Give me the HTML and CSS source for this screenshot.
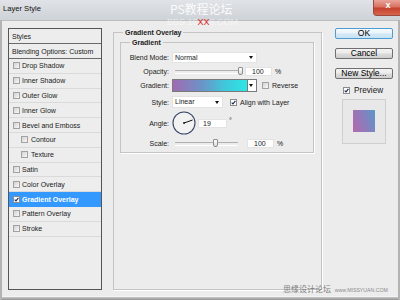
FILE: index.html
```html
<!DOCTYPE html>
<html lang="en">
<head>
  <meta charset="UTF-8">
  <meta name="viewport" content="width=device-width, initial-scale=1.0">
  <title>Layer Style</title>
  <link rel="stylesheet" href="styles.css">
</head>
<body>
  <div class="window">
    <div class="titlebar">
      <span class="title">Layer Style</span>
      <a class="btn-close" href="javascript:void(0);">x</a>
    </div>
    <div class="client">
      <!-- styles list -->
      <ul class="styles">
        <li class="head">Styles</li>
        <li class="head">Blending Options: Custom</li>
        <li class="item"><i class="check"></i>Drop Shadow</li>
        <li class="item"><i class="check"></i>Inner Shadow</li>
        <li class="item"><i class="check"></i>Outer Glow</li>
        <li class="item"><i class="check"></i>Inner Glow</li>
        <li class="item"><i class="check"></i>Bevel and Emboss</li>
        <li class="item sub"><i class="check"></i>Contour</li>
        <li class="item sub"><i class="check"></i>Texture</li>
        <li class="item"><i class="check"></i>Satin</li>
        <li class="item"><i class="check"></i>Color Overlay</li>
        <li class="item active"><i class="check on"><svg viewBox="0 0 6 6"><path d="M0.8 3.1 L2.4 4.7 L5.3 1" /></svg></i>Gradient Overlay</li>
        <li class="item"><i class="check"></i>Pattern Overlay</li>
        <li class="item"><i class="check"></i>Stroke</li>
      </ul>

      <!-- gradient overlay options -->
      <fieldset class="group overlay">
        <legend>Gradient Overlay</legend>
        <fieldset class="group gradient">
          <legend>Gradient</legend>
          <div class="row r-blend">
            <label>Blend Mode:</label>
            <div class="select blend">Normal</div>
          </div>
          <div class="row r-opacity">
            <label>Opacity:</label>
            <div class="slider opacity"><span class="thumb"></span></div>
            <div class="field">100</div>
            <span class="unit">%</span>
          </div>
          <div class="row r-gradient">
            <label>Gradient:</label>
            <div class="grad-pick"><span class="bar"></span><span class="drop"></span></div>
            <i class="check reverse"></i><span>Reverse</span>
          </div>
          <div class="row r-style">
            <label>Style:</label>
            <div class="select style">Linear</div>
            <i class="check on align"><svg viewBox="0 0 6 6"><path d="M0.8 3.1 L2.4 4.7 L5.3 1" /></svg></i><span>Align with Layer</span>
          </div>
          <div class="row r-angle">
            <label>Angle:</label>
            <svg class="dial" viewBox="0 0 24 24">
              <circle cx="12" cy="12" r="11" />
              <line x1="12" y1="12" x2="20.6" y2="9" />
              <circle class="dot" cx="12" cy="12" r="0.9" />
            </svg>
            <div class="field angle">19</div>
            <span class="deg">°</span>
          </div>
          <div class="row r-scale">
            <label>Scale:</label>
            <div class="slider scale"><span class="thumb"></span></div>
            <div class="field">100</div>
            <span class="unit">%</span>
          </div>
        </fieldset>
      </fieldset>

      <!-- buttons and preview -->
      <div class="side">
        <button class="btn default">OK</button>
        <button class="btn">Cancel</button>
        <button class="btn">New Style...</button>
        <div class="preview-check"><i class="check on"><svg viewBox="0 0 6 6"><path d="M0.8 3.1 L2.4 4.7 L5.3 1" /></svg></i>Preview</div>
        <div class="preview"><div class="swatch"></div></div>
      </div>
    </div>
    <div class="frame-bottom"></div>

    <div class="wm-top">PS教程论坛</div>
    <div class="wm-url">BBS.16<span>XX</span>8.COM</div>
    <div class="wm-bottom">思缘设计论坛 <small>www.MISSYUAN.COM</small></div>
  </div>
</body>
</html>
```

FILE: styles.css
```css
/* base */
* {
  margin: 0;
  padding: 0;
  box-sizing: border-box;
}
body {
  width: 400px;
  height: 300px;
  overflow: hidden;
  font-family: "Liberation Sans", Arial, sans-serif;
  font-size: 7px;
  color: #1a1a1a;
}
ul {
  list-style: none;
}

/* window frame */
.window {
  position: relative;
  width: 400px;
  height: 300px;
  background: #b3b3b3;
}
.titlebar {
  position: relative;
  height: 20px;
  padding-left: 3px;
  line-height: 18px;
  font-size: 7.6px;
  color: #111;
  background: linear-gradient(180deg, #e0e4e8 0%, #d5d9de 60%, #ced3d9 100%);
}
.titlebar .btn-close {
  position: absolute;
  top: 0;
  right: -3px;
  width: 30px;
  height: 16px;
  line-height: 14px;
  text-align: center;
  font: bold 9px "Liberation Sans", sans-serif;
  color: #fff;
  text-decoration: none;
  border: 1px solid #9c4a3e;
  border-top: none;
  border-radius: 0 0 4px 4px;
  background: linear-gradient(180deg, #e9a599 0%, #d87362 45%, #c4432f 55%, #d6664f 100%);
}
.client {
  display: flex;
  height: 276px;
  margin: 0 2px;
  padding: 8px 5px 6px 6px;
  background: #ececec;
  box-shadow: inset 0 1px 0 #bdbdbd;
}
.frame-bottom {
  height: 4px;
  margin: 0 2px;
  border-top: 1px solid #f4f4f4;
  background: linear-gradient(180deg, #c9c9c9, #939393);
}

/* styles list */
.styles {
  flex: none;
  width: 94px;
  border: 1px solid #555;
  background: #ededed;
}
.styles li {
  display: flex;
  align-items: center;
  white-space: nowrap;
}
.styles .head {
  height: 15px;
  padding-left: 3px;
  border-bottom: 1px solid #6a6a6a;
}
.styles .item {
  height: 14.8px;
  padding-left: 4px;
  border-bottom: 1px solid #dadada;
}
.styles .item.sub {
  padding-left: 12px;
}
.styles .item.sub .check {
  margin-right: 3px;
}
.styles .item.active {
  font-weight: bold;
  color: #fff;
  background: #3399ff;
  border-bottom-color: #3399ff;
}

/* checkbox */
.check {
  display: inline-block;
  flex: none;
  width: 7px;
  height: 7px;
  margin-right: 2px;
  border: 1px solid #a2a2a2;
  background: linear-gradient(135deg, #d2d2d2, #f8f8f8);
}
.check.on {
  border-color: #8c8c8c;
  background: #fff;
}
.check svg {
  display: block;
  width: 5px;
  height: 5px;
}
.check svg path {
  fill: none;
  stroke: #1d2e55;
  stroke-width: 1.4;
}

/* group boxes */
.group {
  border: 1px solid #c4c4c4;
  box-shadow: 1px 1px 0 #fff;
}
.group legend {
  margin-left: 9px;
  padding: 0 2px;
  line-height: 9px;
  font-weight: bold;
  color: #222;
}
.overlay {
  flex: none;
  width: 209px;
  margin-left: 11px;
}
.gradient {
  margin: 1px 7px 0 6px;
  padding-top: 3px;
}

/* form rows */
.row {
  display: flex;
  align-items: center;
  white-space: nowrap;
}
.row label {
  flex: none;
  width: 48px;
  margin-right: 3px;
  text-align: right;
}
.r-blend { height: 14px; }
.r-opacity { height: 14px; }
.r-gradient { height: 14px; }
.r-style { height: 20px; }
.r-angle { height: 22px; }
.r-scale { height: 18px; }

.select {
  position: relative;
  flex: none;
  padding-left: 2px;
  background: #fff;
  border: 1px solid #e3e3e3;
}
.select::after {
  content: '';
  position: absolute;
  top: 50%;
  right: 3px;
  margin-top: -1px;
  border-left: 2.5px solid transparent;
  border-right: 2.5px solid transparent;
  border-top: 3px solid #111;
}
.select.blend {
  width: 85px;
  height: 11px;
  line-height: 9px;
}
.select.style {
  width: 51px;
  height: 12px;
  line-height: 10px;
}

.slider {
  position: relative;
  flex: none;
  height: 10px;
  margin-left: 3px;
}
.slider::before {
  content: '';
  position: absolute;
  top: 4px;
  left: 0;
  right: 2px;
  height: 2px;
  border-top: 1px solid #b0b0b0;
  border-bottom: 1px solid #fff;
}
.slider .thumb {
  position: absolute;
  top: 1px;
  width: 5px;
  height: 8px;
  border: 1px solid #8e8e8e;
  border-radius: 1px 1px 2px 2px;
  background: linear-gradient(180deg, #fff, #d9d9d9);
}
.slider.opacity {
  width: 68px;
}
.slider.opacity .thumb {
  left: 63px;
}
.slider.scale {
  width: 65px;
}
.slider.scale .thumb {
  left: 38px;
}

.field {
  flex: none;
  width: 27px;
  height: 9px;
  margin-left: 2px;
  padding-left: 6px;
  line-height: 8px;
  background: #fff;
  border: 1px solid #e3e3e3;
}
.r-scale .field {
  margin-left: 7px;
}
.field.angle {
  width: 29px;
  margin-left: 2px;
  padding-left: 4px;
}
.unit {
  margin-left: 3px;
}
.deg {
  margin-left: 2px;
  margin-top: -5px;
}

.grad-pick {
  display: flex;
  flex: none;
  height: 13px;
  border: 1px solid #7a7a7a;
}
.grad-pick .bar {
  width: 74px;
  background: linear-gradient(90deg, #a06bb2 0%, #6a95c8 40%, #3fc8dc 70%, #2ee6e4 100%);
}
.grad-pick .drop {
  position: relative;
  width: 9px;
  background: #fff;
  border-left: 1px solid #7a7a7a;
}
.grad-pick .drop::after {
  content: '';
  position: absolute;
  top: 4px;
  left: 1px;
  border-left: 2.5px solid transparent;
  border-right: 2.5px solid transparent;
  border-top: 3px solid #111;
}
.check.reverse {
  margin-left: 5px;
  margin-right: 3px;
}
.check.align {
  margin-left: 7px;
  margin-right: 3px;
}

.dial {
  flex: none;
  width: 24px;
  height: 24px;
}
.dial circle {
  fill: #f2f2f2;
  stroke: #3a4866;
  stroke-width: 1.1;
}
.dial line {
  stroke: #111;
  stroke-width: 1;
}
.dial .dot {
  fill: #111;
  stroke: none;
}

/* right side */
.side {
  flex: none;
  width: 58px;
  margin-left: 13px;
  display: flex;
  flex-direction: column;
  align-items: center;
}
.btn {
  width: 58px;
  height: 11px;
  margin-bottom: 9px;
  font: 8.5px/9px "Liberation Sans", Arial, sans-serif;
  color: #000;
  border: 1px solid #707070;
  border-radius: 2px;
  background: linear-gradient(180deg, #f3f3f3 0%, #ebebeb 48%, #dcdcdc 52%, #cfcfcf 100%);
}
.btn.default {
  border-color: #4d9dd3;
  background: linear-gradient(180deg, #f6fbfe 0%, #e8f3fa 48%, #d4e9f6 52%, #c9e3f4 100%);
}
.preview-check {
  display: flex;
  align-items: center;
  align-self: flex-start;
  margin: -2px 0 0 8px;
  font-size: 8.2px;
  line-height: 9px;
}
.preview-check .check {
  margin-right: 4px;
}
.preview {
  width: 44px;
  height: 45px;
  margin-top: 4px;
  padding: 10px;
  border: 1px solid #cfcfcf;
  background: #e8e8e8;
}
.swatch {
  width: 22px;
  height: 22px;
  background: linear-gradient(71deg, #b56aab 0%, #8c7cbc 50%, #5c98ca 100%);
}

/* watermarks */
.wm-top {
  position: absolute;
  top: 2px;
  left: 170px;
  font: 12px/14px "Noto Sans CJK SC", sans-serif;
  color: rgba(255, 255, 255, .9);
}
.wm-url {
  position: absolute;
  top: 17px;
  left: 167px;
  font: 9px/10px "Liberation Sans", Arial, sans-serif;
  color: rgba(255, 255, 255, .55);
}
.wm-url span {
  color: #e02222;
}
.wm-bottom {
  position: absolute;
  top: 284px;
  left: 283px;
  font: 8px/9px "Noto Sans CJK SC", sans-serif;
  color: #7c7c7c;
  white-space: nowrap;
}
.wm-bottom small {
  font: 5.2px "Liberation Sans", Arial, sans-serif;
  color: #8a8a8a;
  margin-left: 2px;
}
```
